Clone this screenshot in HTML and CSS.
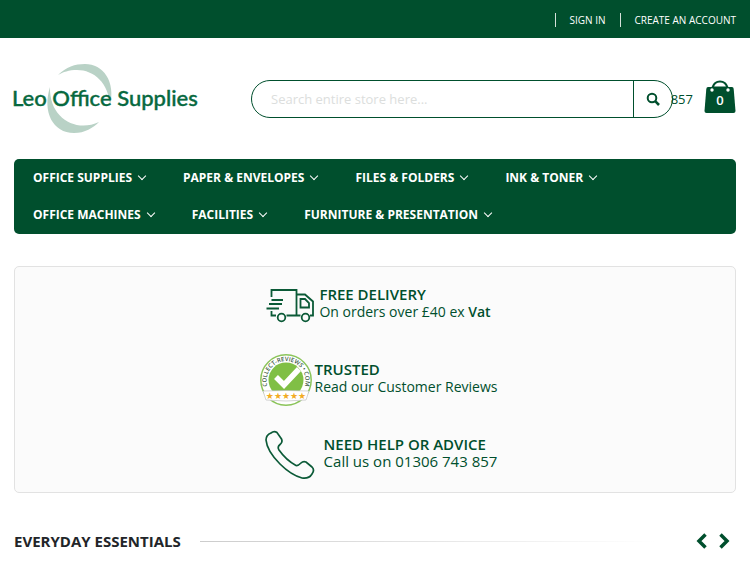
FILE: index.html
```
<!DOCTYPE html>
<html lang="en">
  <head>
    <meta charset="UTF-8" />
    <meta name="viewport" content="width=device-width, initial-scale=1.0" />
    <title>Leo Office Supplies</title>
    <link rel="stylesheet" href="styles.css">
  </head>
  <body>
    <div class="top-bar">
      <a href="#">Sign In</a>
      <a href="#">Create an Account</a>
    </div>

    <header class="header">
      <a href="#" class="logo">
        <svg width="184" height="72" viewBox="0 0 184 72" role="img" aria-label="Leo Office Supplies">
          <path fill="#b9d2c6" d="M44 12C52 4 61 1 71 1C89 1 102 18 96 43C95 20 80 7 63 7C55 7 49 9 44 12Z" />
          <path fill="#b9d2c6" d="M36 24C28 49 39 70 60 70C71 70 79 65 85 59C62 70 35 55 36 24Z" />
          <text class="logo-text" x="-2" y="43">Leo Office Supplies</text>
        </svg>
      </a>
      <form class="search">
        <input type="text" aria-label="Search" placeholder="Search entire store here..." />
        <button type="button" aria-label="Search">
          <svg width="14" height="14" viewBox="0 0 14 14" fill="none" stroke="#004f2d" stroke-width="2">
            <circle cx="6" cy="6" r="4.3" />
            <path d="M9.2 9.2L13 13" stroke-width="2.6" />
          </svg>
        </button>
      </form>
      <span class="phone">857</span>
      <a href="#" class="cart" aria-label="Cart">
        <svg width="32" height="34" viewBox="0 0 32 34">
          <path fill="#004f2d" d="M4 7H28Q29.500 7 29.700 9L31.500 31Q31.500 33 29.500 33H2.500Q.5 33 .5 31L2.300 9Q2.500 7 4 7Z" />
          <path fill="#fff" stroke="#004f2d" stroke-width="2.200" d="M8.500 7.500C11 -.5 21 -.5 23.500 7.500Z" />
          <circle cx="8" cy="10" r="1.700" fill="#fff" />
          <circle cx="24" cy="10" r="1.700" fill="#fff" />
        </svg>
        <span class="cart-count">0</span>
      </a>
    </header>

    <nav class="menu">
      <a href="#">Office Supplies</a>
      <a href="#">Paper &amp; Envelopes</a>
      <a href="#">Files &amp; Folders</a>
      <a href="#">Ink &amp; Toner</a>
      <a href="#">Office Machines</a>
      <a href="#">Facilities</a>
      <a href="#">Furniture &amp; Presentation</a>
    </nav>

    <section class="features">
      <div class="feature delivery">
        <svg width="50" height="36" viewBox="0 0 50 36" fill="none" stroke="#0b5a37" stroke-width="1.800">
          <path d="M6.500 10V3H31.500V28.500H21.500M6.500 24V28.500H11M31.500 7.500H40L48 14.500V28.500H45M31.500 28.500H35.500" />
          <path d="M35.500 12H40L44 16V20.500H35.500ZM6.500 13H18M4 17H17M1.500 21.500H14" />
          <circle cx="16.500" cy="30.500" r="3.800" />
          <circle cx="40.500" cy="30.500" r="3.800" />
        </svg>
        <div>
          <h3>FREE DELIVERY</h3>
          <p>On orders over £40 ex <b>Vat</b></p>
        </div>
      </div>
      <div class="feature trusted">
        <svg width="54" height="54" viewBox="0 0 54 54">
          <circle cx="27" cy="27" r="25.200" fill="#fff" stroke="#8bc45a" stroke-width="1.500" />
          <circle cx="27" cy="27" r="17.500" fill="#80bf45" />
          <path id="ring" fill="none" d="M10.500 38A19.500 19.500 0 1 1 43.500 38" />
          <text class="badge-text"><textPath href="#ring" startOffset="50%">COLLECT-REVIEWS • COM</textPath></text>
          <path fill="none" stroke="#fff" stroke-width="5.500" d="M17 24L25 32L40 16" />
          <path fill="#fff" stroke="#b7b7b7" stroke-width=".6" d="M4 38Q27 37 50 38L47 47Q27 49 7 47Z" />
          <text class="badge-stars" x="27" y="46">★★★★★</text>
        </svg>
        <div>
          <h3>TRUSTED</h3>
          <p>Read our Customer Reviews</p>
        </div>
      </div>
      <div class="feature help">
        <svg width="50" height="50" viewBox="0 0 50 50" fill="none" stroke="#0b5a37" stroke-width="1.700">
          <path d="M6 3Q9 .5 12 2.500L16.500 9Q18 12 15 14.500Q12 17 14 20Q21 30 31 35.500Q33 36 36 33Q38 31 41 32L47 37Q50 40 47 44Q44 49 37 48Q26 45 15 34Q2 21 1 10Q1 5 6 3Z" />
        </svg>
        <div>
          <h3>NEED HELP OR ADVICE</h3>
          <p>Call us on 01306 743 857</p>
        </div>
      </div>
    </section>

    <div class="section-title">
      <h2>EVERYDAY ESSENTIALS</h2>
      <span class="line"></span>
      <button type="button" aria-label="Previous">
        <svg width="12" height="16" viewBox="0 0 12 16"><path d="M9.500 1.500L3 8L9.500 14.500" /></svg>
      </button>
      <button type="button" aria-label="Next">
        <svg width="12" height="16" viewBox="0 0 12 16"><path d="M2.500 1.500L9 8L2.500 14.500" /></svg>
      </button>
    </div>
  </body>
</html>
```
FILE: styles.css
```
* {
  box-sizing: border-box;
}
body {
  margin: 0;
  font-family: "Open Sans", sans-serif;
  color: #004f2d;
  background-color: #fff;
}
a {
  color: inherit;
  text-decoration: none;
}
h2, h3, p {
  margin: 0;
}
button {
  padding: 0;
  border: none;
  background: none;
  cursor: pointer;
}
svg {
  display: block;
  overflow: visible;
}
.top-bar {
  display: flex;
  justify-content: flex-end;
  align-items: center;
  gap: 14px;
  height: 38px;
  padding: 2px 14px 0;
  background-color: #004f2d;
  color: #fff;
  font-size: 10px;
  line-height: 14px;
  text-transform: uppercase;
}
.top-bar a {
  padding-left: 14px;
  border-left: 1px solid #d5e0da;
}
.header {
  display: flex;
  align-items: center;
  height: 121px;
  padding: 0 14px;
}
.logo {
  margin-right: 53px;
}
.logo-text {
  font-family: Lato, sans-serif;
  font-size: 22px;
  font-weight: 500;
  fill: #07693f;
  stroke: #07693f;
  stroke-width: 0.4px;
}
.search {
  display: flex;
  flex: 1;
  height: 38px;
  border: 1px solid #004f2d;
  border-radius: 19px;
  background-color: #fff;
  overflow: hidden;
}
.search input {
  flex: 1;
  min-width: 0;
  padding: 0 19px;
  border: none;
  outline: none;
  background: none;
  font-family: inherit;
  font-size: 13px;
}
.search input::placeholder {
  color: #dcdedd;
}
.search button {
  display: flex;
  align-items: center;
  justify-content: center;
  width: 39px;
  border-left: 1px solid #004f2d;
}
.phone {
  margin-left: -2px;
  font-size: 13px;
}
.cart {
  position: relative;
  margin: -4px 0 0 11px;
}
.cart-count {
  position: absolute;
  top: 11px;
  left: 0;
  width: 100%;
  color: #fff;
  font-size: 13px;
  font-weight: 600;
  line-height: 18px;
  text-align: center;
}
.menu {
  display: flex;
  flex-wrap: wrap;
  margin: 0 14px;
  padding: 0 4px 1px;
  border-radius: 5px;
  background-color: #004f2d;
  color: #fff;
  font-size: 12px;
  font-weight: 700;
  line-height: 37px;
  column-gap: 6px;
  text-transform: uppercase;
}
.menu a {
  padding: 0 15px;
}
.menu a::after {
  content: "";
  display: inline-block;
  width: 5px;
  height: 5px;
  margin: 0 2px 3px 7px;
  border: solid #fff;
  border-width: 0 1px 1px 0;
  transform: rotate(45deg);
}
.features {
  margin: 32px 14px 0;
  border: 1px solid #e2e2e2;
  border-radius: 5px;
  background-color: #fbfbfb;
}
.feature {
  display: flex;
  align-items: center;
  justify-content: center;
  height: 75px;
  padding-left: 6px;
}
.feature div {
  padding-bottom: 4px;
}
.feature h3 {
  font-size: 15px;
  font-weight: 600;
  line-height: 18px;
}
.feature p {
  font-size: 14px;
  line-height: 17px;
}
.feature b {
  font-weight: 600;
}
.delivery {
  gap: 4px;
}
.trusted {
  gap: 2px;
}
.help {
  gap: 9px;
  padding-left: 12px;
}
.help p {
  font-size: 15px;
}
.badge-text {
  font-size: 6px;
  font-weight: 600;
  fill: #3c5b45;
  text-anchor: middle;
}
.badge-stars {
  font-family: "DejaVu Sans", sans-serif;
  font-size: 9px;
  fill: #f2ac24;
  text-anchor: middle;
}
.section-title {
  display: flex;
  align-items: center;
  gap: 10px;
  margin: 36px 20px 0 14px;
}
.section-title h2 {
  color: #222529;
  font-size: 15px;
  font-weight: 700;
  line-height: 24px;
}
.line {
  flex: 1;
  height: 1px;
  margin: 0 30px 0 9px;
  background: linear-gradient(to right, #ccc, #fff);
}
.section-title path {
  fill: none;
  stroke: #004f2d;
  stroke-width: 3.5px;
}
```
